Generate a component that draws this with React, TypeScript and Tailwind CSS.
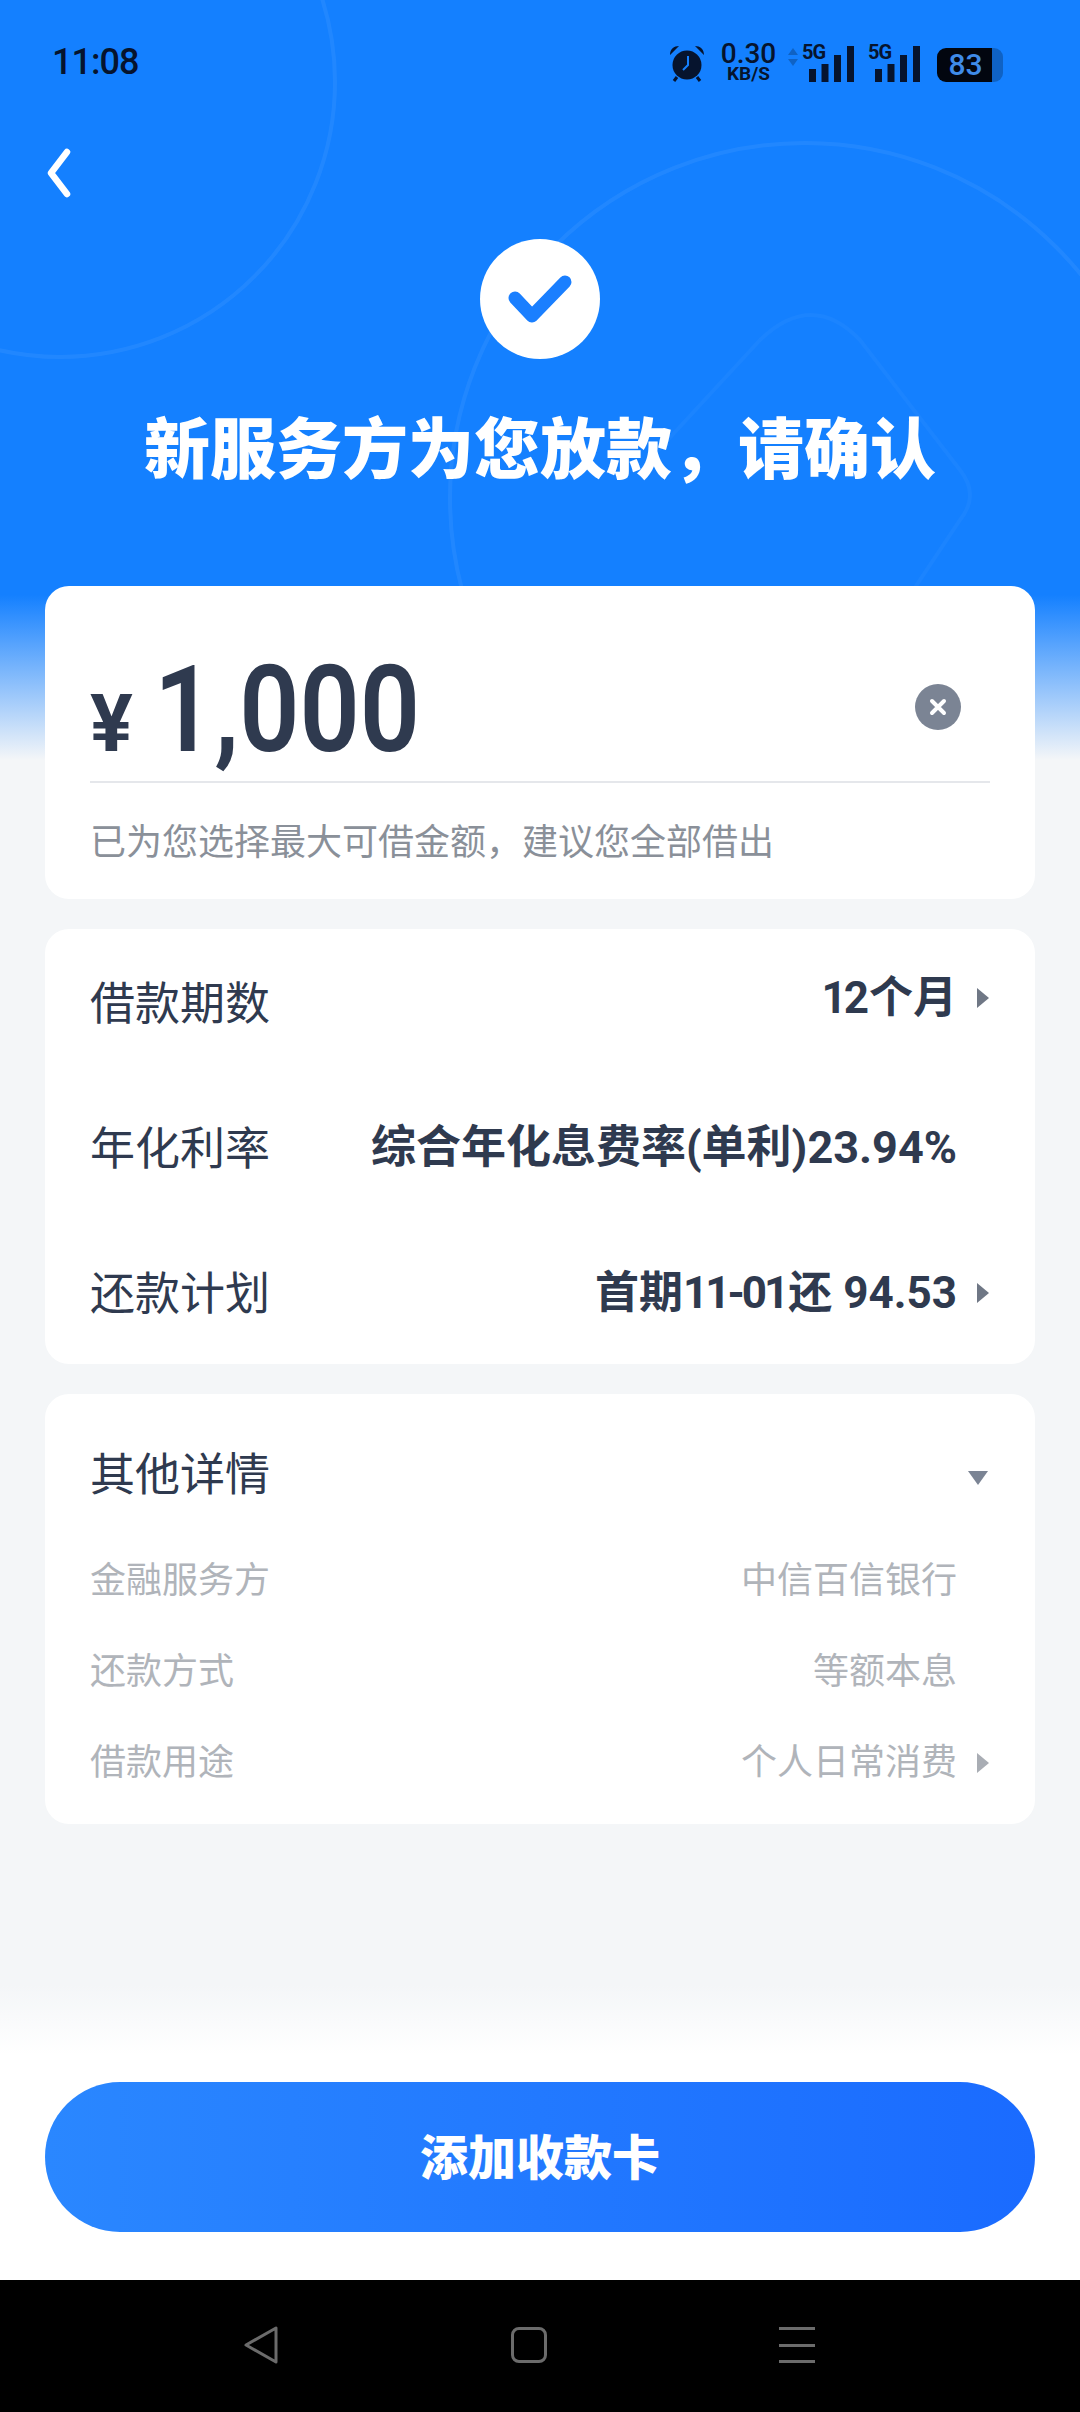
import { ReactNode } from "react"

const Caret = ({ light }: { light?: boolean }) => (
    <svg width="14" height="24" viewBox="0 0 14 24" className={light ? "text-[#a9adb4]" : "text-[#6f7785]"}>
        <path d="M1 2 L13 12 L1 22 Z" fill="currentColor" />
    </svg>
)

const Signal = () => (
    <div className="relative w-[52px] h-[36px]">
        <span className="absolute left-0 -top-[5px] text-[20px] leading-[22px] font-bold tracking-[-1px] text-[#06142e]">5G</span>
        <svg width="52" height="36" viewBox="0 0 52 36" className="text-[#06142e]">
            <rect x="7" y="23" width="7" height="13" fill="currentColor" />
            <rect x="19.5" y="18" width="7" height="18" fill="currentColor" />
            <rect x="32" y="9" width="7" height="27" fill="currentColor" />
            <rect x="45" y="0" width="7" height="36" fill="currentColor" />
        </svg>
    </div>
)

const StatusBar = () => (
    <div className="flex items-center justify-between h-[122px] pl-[52px] pr-[77px] pt-[2px]">
        <span className="text-[36px] leading-none font-medium tracking-[-1px] text-[#06142e]">11:08</span>
        <div className="flex items-end">
            <svg width="38" height="38" viewBox="0 0 38 38" className="text-[#06142e] mr-[14px]">
                <circle cx="19" cy="21" r="14.5" fill="currentColor" />
                <path d="M2 11 C2 5 6 2 11 2 Z M36 11 C36 5 32 2 27 2 Z" fill="currentColor" />
                <path d="M9 33 L6 37 M29 33 L32 37" stroke="currentColor" strokeWidth="3" />
                <path d="M20 12 L20 21 L15 26" stroke="#1480ff" strokeWidth="2" fill="none" />
            </svg>
            <div className="flex flex-col items-center w-[57px] mr-[11px] text-[#06142e]">
                <span className="text-[28px] leading-[22px] font-medium">0.30</span>
                <span className="text-[19px] leading-[16px] font-bold mt-[1px]">KB/S</span>
            </div>
            <svg width="10" height="22" viewBox="0 0 10 22" className="text-[#0f62c4] mb-[14px] mr-[4px]">
                <path d="M5 2 L10 9 H0 Z M5 20 L10 13 H0 Z" fill="currentColor" />
            </svg>
            <Signal />
            <div className="w-[14px]" />
            <Signal />
            <div className="flex items-center ml-[17px]">
                <div className="flex items-center justify-center w-[55px] h-[34px] pl-[2px] rounded-l-[9px] bg-[#02060f] text-[30px] leading-none font-medium text-[#3f8be8]">83</div>
                <div className="w-[11px] h-[34px] rounded-r-[9px] bg-[#0f62c4]" />
            </div>
        </div>
    </div>
)

const Row = ({ label, children, arrow, raised }: { label: string; children: ReactNode; arrow?: boolean; raised?: boolean }) => (
    <div className="flex items-center justify-between h-[145px] shrink-0">
        <span className="text-[45px] leading-none text-[#2f3a4f]">{label}</span>
        <div className={`flex items-center text-[44px] leading-none font-bold text-[#2f3a4f] ${raised ? "-mt-[14px]" : "-mt-[4px]"}`}>
            {children}
            <div className="w-[33px] flex justify-end">{arrow && <Caret />}</div>
        </div>
    </div>
)

const SmallRow = ({ label, value, arrow }: { label: string; value: string; arrow?: boolean }) => (
    <div className="flex items-center justify-between h-[91px]">
        <span className="text-[36px] leading-none text-[#b0b4ba]">{label}</span>
        <div className="flex items-center text-[36px] leading-none text-[#b0b4ba]">
            {value}
            <div className="w-[33px] flex justify-end">{arrow && <Caret light />}</div>
        </div>
    </div>
)

export default function App() {
    return (
        <div className="relative flex flex-col w-[1080px] h-[2412px] overflow-hidden font-[Roboto,'Noto_Sans_CJK_SC',sans-serif] bg-[linear-gradient(to_bottom,#1480ff_0,#1480ff_595px,#f4f6f8_760px,#f4f6f8_1985px,#ffffff_2055px)]">
            {/* header decoration */}
            <svg width="1080" height="590" viewBox="0 0 1080 590" className="absolute top-0 left-0" fill="none" stroke="#ffffff" strokeOpacity="0.06" strokeWidth="4">
                <circle cx="60" cy="82" r="275" />
                <circle cx="805" cy="498" r="355" />
                <path d="M760 340 Q812 290 860 340 L960 470 Q980 495 960 520 L880 640 M640 470 L760 340" strokeOpacity="0.03" />
            </svg>

            <div className="relative flex flex-col flex-1">
                <StatusBar />

                <div className="pl-[47px] pt-[26px]">
                    <svg width="24" height="50" viewBox="0 0 24 50" fill="none" stroke="#ffffff" strokeWidth="6.5" strokeLinecap="round" strokeLinejoin="round">
                        <path d="M20 4 L4 25 L20 46" />
                    </svg>
                </div>

                <div className="flex justify-center mt-[41px]">
                    <div className="flex items-center justify-center size-[120px] rounded-full bg-white">
                        <svg width="66" height="50" viewBox="0 0 66 50" fill="none" stroke="#1a7fff" strokeWidth="13" strokeLinecap="round" strokeLinejoin="round">
                            <path d="M8 24 L25 42 L58 8" />
                        </svg>
                    </div>
                </div>

                <h1 className="mt-[52px] text-center text-[66px] leading-[80px] font-black text-white">新服务方为您放款，请确认</h1>

                <div className="flex flex-col gap-[30px] mx-[45px] mt-[95px]">
                    <div className="h-[313px] px-[45px] bg-white rounded-[24px]">
                        <div className="flex items-end justify-between h-[197px] pb-[2px] border-b-2 border-[#e5e7eb]">
                            <div className="flex items-baseline text-[#2f3a4f] pb-[15px]">
                                <span className="text-[80px] leading-none font-bold mr-[21px]">¥</span>
                                <span className="inline-block origin-left scale-x-[0.88] text-[120px] leading-[90px] font-semibold">1,000</span>
                            </div>
                            <div className="flex items-center justify-center size-[46px] mr-[29px] mb-[49px] rounded-full bg-[#7b8494]">
                                <svg width="20" height="20" viewBox="0 0 20 20" stroke="#ffffff" strokeWidth="4" strokeLinecap="round">
                                    <path d="M4 4 L16 16 M16 4 L4 16" />
                                </svg>
                            </div>
                        </div>
                        <p className="mt-[42px] text-[36px] leading-none text-[#8a9099]">已为您选择最大可借金额，建议您全部借出</p>
                    </div>

                    <div className="h-[435px] pt-[3px] px-[45px] bg-white rounded-[24px] flex flex-col">
                        <Row label="借款期数" arrow raised><span className="tracking-[-3px] mr-[3px]">12</span>个月</Row>
                        <Row label="年化利率"><span className="text-[45px]">综合年化息费率(单利)23.94%</span></Row>
                        <Row label="还款计划" arrow>首期<span className="tracking-[-3px] mr-[2px]">11-01</span>还 94.53</Row>
                    </div>

                    <div className="h-[430px] px-[45px] bg-white rounded-[24px]">
                        <div className="flex items-center justify-between h-[141px] pt-[22px]">
                            <span className="text-[45px] leading-none text-[#2f3a4f]">其他详情</span>
                            <svg width="20" height="14" viewBox="0 0 20 14" className="mr-[2px] mt-[4px]">
                                <path d="M0 0 H20 L10 14 Z" fill="#7b8494" />
                            </svg>
                        </div>
                        <SmallRow label="金融服务方" value="中信百信银行" />
                        <SmallRow label="还款方式" value="等额本息" />
                        <SmallRow label="借款用途" value="个人日常消费" arrow />
                    </div>
                </div>

                <div className="mt-auto px-[45px] pb-[48px]">
                    <button className="w-full h-[150px] pt-[4px] rounded-full bg-[linear-gradient(to_right,#2a87ff,#1a6bff)] text-[48px] font-black text-white">添加收款卡</button>
                </div>
            </div>

            {/* system nav */}
            <div className="relative flex items-center h-[132px] bg-black pb-[2px]">
                <div className="flex items-center justify-center w-[1080px] gap-[232px] pr-[22px]">
                    <svg width="36" height="38" viewBox="0 0 36 38" fill="none" stroke="#6b6b6b" strokeWidth="3" strokeLinejoin="round">
                        <path d="M33 2 V36 L3 19 Z" />
                    </svg>
                    <div className="w-[36px] h-[36px] rounded-[8px] border-[3px] border-[#6b6b6b]" />
                    <div className="flex flex-col justify-between w-[36px] h-[36px]">
                        <div className="h-[3px] bg-[#6b6b6b]" />
                        <div className="h-[3px] bg-[#6b6b6b]" />
                        <div className="h-[3px] bg-[#6b6b6b]" />
                    </div>
                </div>
            </div>
        </div>
    )
}
